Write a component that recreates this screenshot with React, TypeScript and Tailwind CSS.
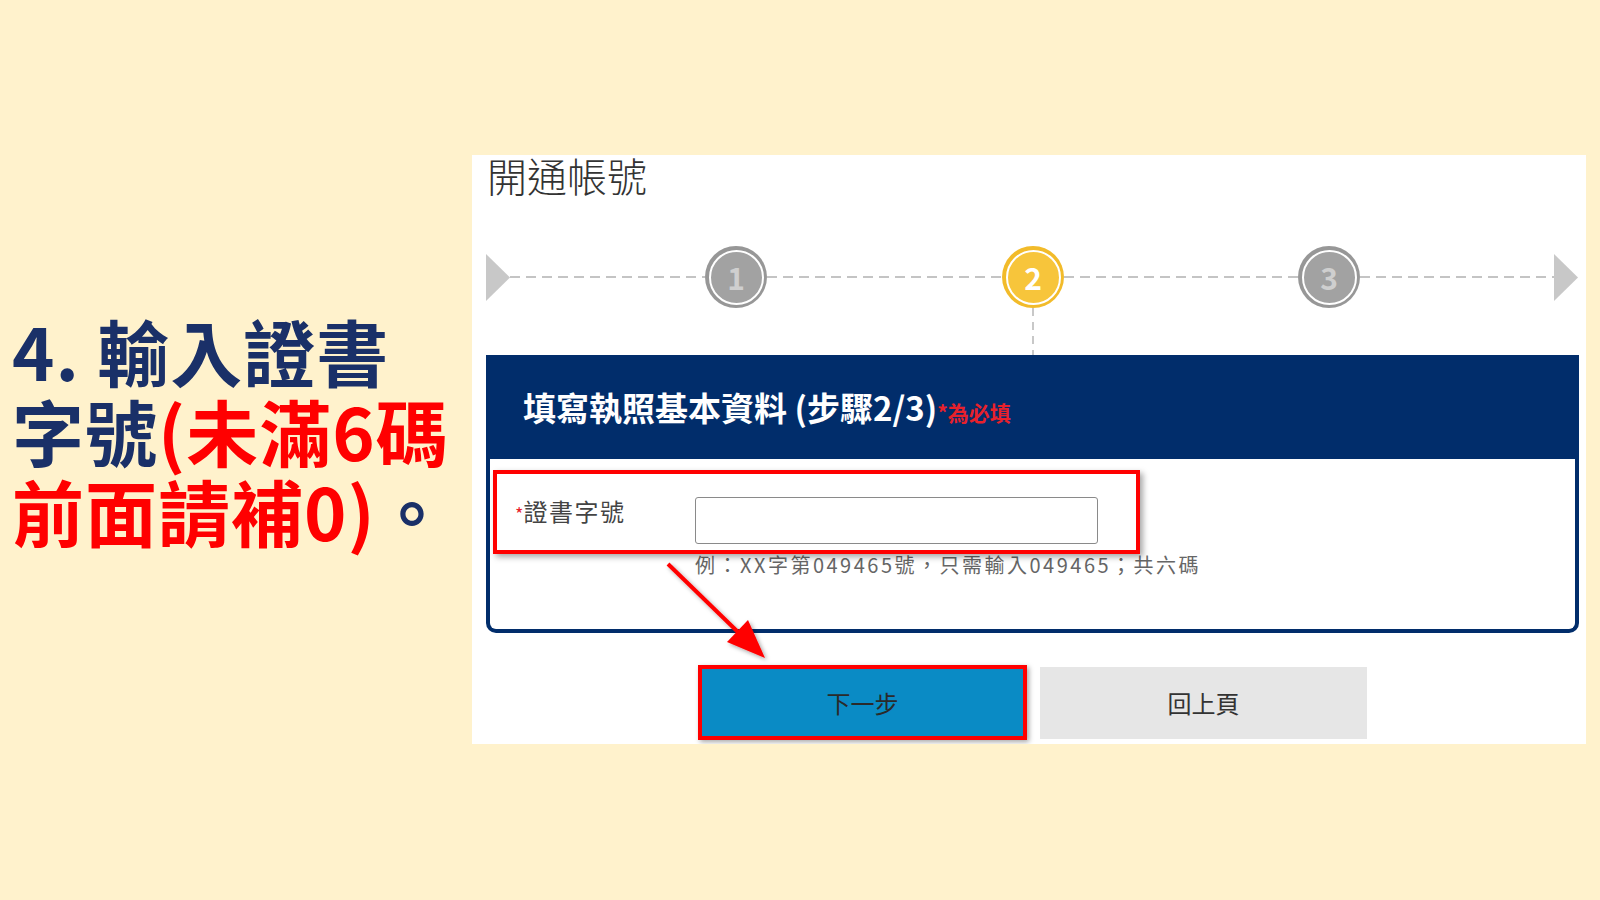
import React from "react";

const dashH =
  "h-[2px] bg-[linear-gradient(to_right,#c4c4c4_0_10px,transparent_10px_16px)] bg-[length:16px_2px] bg-repeat-x";

function Circle({ n, active }: { n: string; active?: boolean }) {
  return (
    <div
      className={
        "w-[62px] h-[62px] shrink-0 rounded-full flex items-center justify-center " +
        (active ? "bg-[#f2bb2a]" : "bg-[#979797]")
      }
    >
      <div
        className={
          "w-[55px] h-[55px] rounded-full border-2 border-white flex items-center justify-center text-[30px] font-bold leading-none " +
          (active ? "bg-[#f7c53b] text-white" : "bg-[#a2a2a2] text-[#cfcfcf]")
        }
      >
        {n}
      </div>
    </div>
  );
}

function Tri() {
  return (
    <div className="w-[24px] h-[47px] shrink-0 flex items-center">
      <svg width="24" height="47" viewBox="0 0 24 47">
        <polygon points="0,0 24,23.5 0,47" fill="#c8c8c8" />
      </svg>
    </div>
  );
}

export default function App() {
  return (
    <div
      className="w-[1600px] h-[900px] bg-[#fff2cc] relative flex overflow-hidden"
      style={{ fontFamily: '"Noto Sans CJK TC", "Noto Sans", sans-serif' }}
    >
      {/* Left caption */}
      <div className="w-[472px] shrink-0 pl-[12px] pt-[310px]">
        <div className="text-[72px] leading-[80px] font-bold text-[#1a3068] tracking-[1px]">
          <div>4. 輸入證書</div>
          <div>
            字號<span className="text-[#ff0000]">(未滿6碼</span>
          </div>
          <div>
            <span className="text-[#ff0000]">前面請補0)</span>。
          </div>
        </div>
      </div>

      {/* Panel */}
      <div className="mt-[155px] w-[1114px] h-[589px] bg-white flex flex-col overflow-hidden">
        <div className="pl-[15px] text-[40px] leading-[40px] font-light text-[#333333]">
          開通帳號
        </div>

        {/* steps */}
        <div className="ml-[14px] w-[1093px] mt-[51px] flex items-center h-[62px]">
          <Tri />
          <div className={"w-[195px] " + dashH} />
          <Circle n="1" />
          <div className={"w-[235px] " + dashH} />
          <Circle n="2" active />
          <div className={"w-[234px] " + dashH} />
          <Circle n="3" />
          <div className={"w-[194px] " + dashH} />
          <Tri />
        </div>
        <div className="ml-[14px] w-[1093px] flex justify-center">
          <div className="w-[2px] h-[47px] bg-[linear-gradient(to_bottom,#c8c8c8_0_8px,transparent_8px_14px)] bg-[length:2px_14px] bg-repeat-y" />
        </div>

        {/* navy box */}
        <div className="ml-[14px] w-[1093px]">
          <div className="h-[104px] bg-[#012d6b] flex items-center pl-[37px]">
            <span className="text-white text-[33px] font-bold leading-none">
              填寫執照基本資料 (步驟2/3)
            </span>
            <span className="text-[#e8212b] text-[21px] font-bold leading-none mt-[10px]">
              *為必填
            </span>
          </div>
          <div className="relative h-[174px] border-4 border-t-0 border-[#012d6b] rounded-b-[10px] pl-[25px] pt-[38px]">
            <div className="flex items-start">
              <div className="w-[180px] text-[24px] leading-[28px] tracking-[1.5px] text-[#444444] whitespace-nowrap">
                <span className="text-[#e8212b] text-[18px] tracking-normal">*</span>證書字號
              </div>
              <div className="w-[403px] h-[47px] border border-[#8a8a8a] rounded-[3px] bg-white" />
            </div>
            <div className="ml-[180px] mt-[11px] text-[20px] leading-[20px] tracking-[2.5px] text-[#666666] whitespace-nowrap">
              例：XX字第049465號，只需輸入049465；共六碼
            </div>
            <div className="absolute left-[3px] top-[11px] w-[647px] h-[84px] border-4 border-[#ff0000] shadow-[3px_3px_6px_rgba(0,0,0,0.35)]" />
          </div>
        </div>

        {/* buttons */}
        <div className="ml-[14px] w-[1093px] mt-[32px] flex justify-center items-center gap-[13px]">
          <div className="w-[329px] h-[75px] border-4 border-[#ff0000] bg-[#0a8bc5] flex items-center justify-center text-[24px] text-[#2a2a2a] shadow-[2px_2px_5px_rgba(0,0,0,0.35)]">
            下一步
          </div>
          <div className="w-[327px] h-[72px] bg-[#e6e6e6] flex items-center justify-center text-[24px] text-[#333333]">
            回上頁
          </div>
        </div>
      </div>

      {/* red arrow annotation */}
      <svg
        className="absolute left-0 top-0 pointer-events-none"
        width="1600"
        height="900"
        viewBox="0 0 1600 900"
      >
        <defs>
          <filter id="sh" x="-20%" y="-20%" width="140%" height="140%">
            <feDropShadow dx="2" dy="2" stdDeviation="2" floodColor="#000" floodOpacity="0.35" />
          </filter>
        </defs>
        <g filter="url(#sh)">
          <line x1="668" y1="564" x2="740" y2="634" stroke="#ff0000" strokeWidth="4" />
          <polygon points="765,658 727,642 748,620" fill="#ff0000" />
        </g>
      </svg>
    </div>
  );
}
